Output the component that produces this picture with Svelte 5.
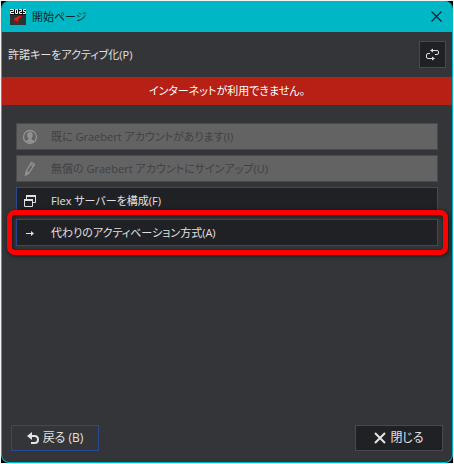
<script>
  const options = [
    { icon: 'user', label: '既に Graebert アカウントがあります(I)', disabled: true },
    { icon: 'pencil', label: '無償の Graebert アカウントにサインアップ(U)', disabled: true },
    { icon: 'windows', label: 'Flex サーバーを構成(F)', disabled: false },
    { icon: 'arrow', label: '代わりのアクティベーション方式(A)', disabled: false, marked: true }
  ];
</script>

<div class="page">
  <div class="backdrop">
    <div class="window">
      <header class="titlebar">
        <svg class="logo" width="16" height="16" viewBox="0 0 16 16" aria-hidden="true">
          <rect width="16" height="16" fill="#303236" />
          <rect width="16" height="6" fill="#101214" />
          <g fill="none" stroke="#fff" stroke-width="1">
            <path d="M0 0.500H3.500V2.500H0.500V4.500H4" />
            <path d="M5.500 0.500H7.500V4.500H5.500Z" />
            <path d="M9 0.500H11.500V2.500H9.500V4.500H12" />
            <path d="M16 0.500H13.500V2.500H15.500V4.500H13" />
          </g>
          <path d="M12 7C7 7 4 9 4 11C4 13 6 14 8 15.500C7 12.500 8 10 12 7Z" fill="#e51b12" />
          <path d="M4 11C4 13 6 14 8 15.500L7 12Z" fill="#8f0d0a" />
        </svg>
        <h1>開始ページ</h1>
        <button class="dismiss" type="button" aria-label="閉じる">
          <svg width="11" height="11" viewBox="0 0 11 11"><path d="M0.500 0.500L10.500 10.500M10.500 0.500L0.500 10.500" stroke="#10262a" stroke-width="1.200" /></svg>
        </button>
      </header>

      <div class="heading">
        <h2>許諾キーをアクティブ化(P)</h2>
        <button class="refresh" type="button" aria-label="更新">
          <svg width="13" height="13" viewBox="0 0 13 13" fill="none" stroke="#dedede">
            <path d="M5 2.500H11Q12.500 2.500 12.500 4V5Q12.500 6.500 11 6.500H9" />
            <path d="M8 10.500H2Q0.500 10.500 0.500 9V7Q0.500 5.500 2 5.500H4" />
            <path d="M7 0.500V4.500L4 2.500Z" fill="#dedede" stroke="none" />
            <path d="M6 8.500V12.500L9 10.500Z" fill="#dedede" stroke="none" />
          </svg>
        </button>
      </div>

      <p class="alert" role="alert">インターネットが利用できません。</p>

      <main>
        {#each options as option}
          <div class="row" class:marked={option.marked}>
            <button class="option" type="button" disabled={option.disabled}>
              <svg width="16" height="16" viewBox="0 0 16 16" fill="none" aria-hidden="true">
                {#if option.icon === 'user'}
                  <circle cx="8" cy="8" r="6.500" stroke="#929292" stroke-width="1.300" />
                  <path d="M8 3C6 3 5 4.500 5.200 6.500C5.300 8 6 8.800 6.400 9.300V10.500L3.500 12C5 14.500 11 14.500 12.500 12L9.600 10.500V9.300C10 8.800 10.700 8 10.800 6.500C11 4.500 10 3 8 3Z" fill="#929292" />
                {:else if option.icon === 'pencil'}
                  <path d="M9.500 1.500L12.500 3.200L7 12L3.500 14.200L4.200 10.200ZM8.500 3.200L11.500 5M4.200 10.200L7 12" stroke="#929292" stroke-width="1.300" />
                  <path d="M4 11L6.500 12.500L3 15Z" fill="#929292" />
                {:else if option.icon === 'windows'}
                  <path d="M4.500 6V2.500H13.500V9.500H11" stroke="#e0e0e0" />
                  <path d="M4 3H14" stroke="#e0e0e0" stroke-width="2" />
                  <path d="M2.500 6.500H10.500V13.500H2.500Z" stroke="#e0e0e0" />
                  <path d="M2 7H11" stroke="#e0e0e0" stroke-width="2" />
                {:else}
                  <path d="M4 8.500H10" stroke="#e0e0e0" />
                  <path d="M9 6L12 8.500L9 11Z" fill="#e0e0e0" />
                {/if}
              </svg>
              <span>{option.label}</span>
            </button>
          </div>
        {/each}
      </main>

      <footer>
        <button class="back" type="button">
          <svg width="12" height="13" viewBox="0 0 12 13" aria-hidden="true">
            <path d="M3 4H7.500Q11 4 11 7.500Q11 11 7.500 11H4" fill="none" stroke="#e4e4e4" stroke-width="2" />
            <path d="M0 4L5 0V8Z" fill="#e4e4e4" />
          </svg>
          <span>戻る (B)</span>
        </button>
        <button class="close" type="button">
          <svg width="12" height="12" viewBox="0 0 12 12" aria-hidden="true"><path d="M1 1L11 11M11 1L1 11" stroke="#e4e4e4" stroke-width="2" /></svg>
          <span>閉じる</span>
        </button>
      </footer>
    </div>
  </div>
</div>

<style>
  .page {
    box-sizing: border-box;
    min-height: 100vh;
    padding: 1px;
    display: flex;
    background: #f4f4f4;
    font-family: "Open Sans", "Noto Sans CJK JP", sans-serif;
    font-size: 11px;
    line-height: 18px;
    font-feature-settings: "palt";
    color: #e0e0e0;
  }
  .backdrop {
    flex: 1;
    display: flex;
    background: #000;
  }
  .window {
    flex: 1;
    display: flex;
    flex-direction: column;
    border: 1px solid #00b7c3;
    border-top: 0;
    border-radius: 8px;
    overflow: hidden;
    background: #343538;
  }
  h1, h2, p {
    margin: 0;
    font-size: inherit;
    font-weight: 400;
  }
  button {
    box-sizing: border-box;
    margin: 0;
    padding: 0;
    display: flex;
    align-items: center;
    font: inherit;
    font-feature-settings: inherit;
    color: inherit;
    border: 1px solid #48494c;
    background: #202125;
  }
  svg {
    display: block;
    flex: none;
  }
  .titlebar {
    display: flex;
    align-items: center;
    gap: 6px;
    height: 31px;
    padding: 0 8px;
    background: #00b7c6;
    color: #10262a;
  }
  h1 {
    flex: 1;
  }
  .dismiss {
    padding: 2px;
    border: 0;
    background: none;
  }
  .heading {
    display: flex;
    align-items: center;
    justify-content: space-between;
    height: 45px;
    padding: 0 6px;
  }
  .refresh {
    width: 27px;
    height: 27px;
    justify-content: center;
  }
  .alert {
    padding: 5px 0;
    background: #b72015;
    color: #fff;
    text-align: center;
  }
  main {
    flex: 1;
    display: flex;
    flex-direction: column;
    gap: 5px;
    padding: 18px 14px;
  }
  .row {
    position: relative;
  }
  .option {
    width: 100%;
    height: 27px;
    padding: 0 5px;
    gap: 13px;
    border-color: #2a4990;
  }
  .option:disabled {
    border-color: #4b4b4c;
    background: #636363;
    color: #404143;
  }
  .marked::after {
    content: "";
    position: absolute;
    inset: -9px -10px -9px -9px;
    border: 5px solid #f00;
    border-radius: 8px;
    box-shadow: 1px 1px 4px #0009, inset 1px 1px 4px #0009;
    pointer-events: none;
  }
  footer {
    display: flex;
    justify-content: space-between;
    padding: 0 9px 11px;
    font-size: 12px;
  }
  footer button {
    width: 88px;
    height: 26px;
    justify-content: center;
    gap: 4px;
  }
  .back {
    border-color: #2a4990;
    background: #343538;
  }
</style>
